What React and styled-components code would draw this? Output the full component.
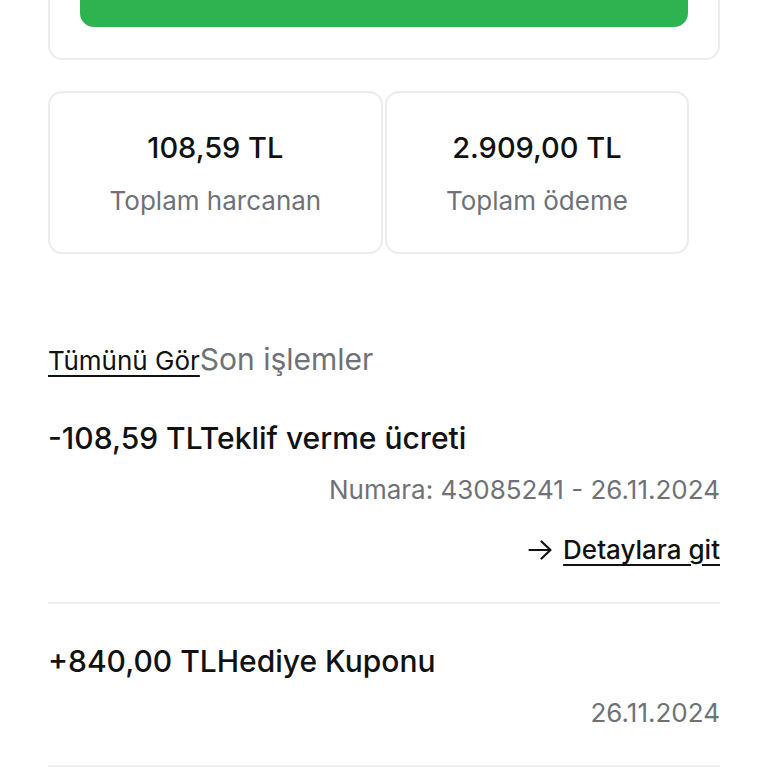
import React from 'react';
import styled, { createGlobalStyle } from 'styled-components';

const Global = createGlobalStyle`
  body {
    margin: 0;
    background: #ffffff;
    font-family: Inter, Roboto, "Liberation Sans", sans-serif;
    color: #111111;
  }
`;

const Page = styled.div`
  width: 768px;
  height: 768px;
  overflow: hidden;
  box-sizing: border-box;
  padding: 0 48px;
`;

const Scroll = styled.div`
  margin-top: -60px;
`;

const TopCard = styled.div`
  border: 2px solid #ececec;
  border-radius: 14px;
  padding: 30px 30px 31px;
`;

const GreenButton = styled.div`
  height: 55px;
  border-radius: 14px;
  background: #2db350;
`;

const Stats = styled.div`
  display: flex;
  gap: 2px;
  margin-top: 31px;
  padding-right: 31px;
`;

const StatCard = styled.div`
  flex: ${(p) => p.grow};
  height: 163px;
  box-sizing: border-box;
  padding-top: 4px;
  border: 2px solid #ececec;
  border-radius: 14px;
  display: flex;
  flex-direction: column;
  align-items: center;
  justify-content: center;
  gap: 17px;
`;

const StatValue = styled.div`
  font-size: 29px;
  font-weight: 500;
  color: #111;
  line-height: 36px;
`;

const StatLabel = styled.div`
  font-size: 26px;
  color: #6e7278;
  line-height: 36px;
`;

const Heading = styled.div`
  margin: 87px 0 2px;
  display: flex;
  align-items: baseline;
  line-height: 36px;
`;

const SeeAll = styled.a`
  font-size: 26px;
  color: #111;
  text-decoration: underline;
  text-underline-offset: 5px;
  text-decoration-thickness: 2px;
`;

const HeadingTitle = styled.span`
  font-size: 30px;
  color: #6e7278;
`;

const Row = styled.div`
  padding: 39px 0 34px;
  border-bottom: 2px solid #efefef;
  display: flex;
  flex-direction: column;
`;

const RowTitle = styled.div`
  font-size: 30px;
  font-weight: 500;
  line-height: 36px;
  color: #111;
`;

const RowMeta = styled.div`
  margin-top: 16px;
  align-self: flex-end;
  font-size: 26px;
  line-height: 36px;
  color: #6e7278;
`;

const DetailLink = styled.a`
  margin-top: 24px;
  align-self: flex-end;
  display: flex;
  align-items: center;
  gap: 11px;
  font-size: 26px;
  font-weight: 500;
  line-height: 36px;
  color: #111;
`;

const LinkText = styled.span`
  text-decoration: underline;
  text-underline-offset: 5px;
  text-decoration-thickness: 2px;
`;

const Arrow = () => (
  <svg width="24" height="22" viewBox="0 0 24 22" fill="none" stroke="#111" strokeWidth="2.2" strokeLinecap="round" strokeLinejoin="round">
    <path d="M1.5 11h21M13.5 2.5l9 8.5-9 8.5" />
  </svg>
);

export default function App() {
  return (
    <Page>
      <Global />
      <Scroll>
        <TopCard>
          <GreenButton />
        </TopCard>
        <Stats>
          <StatCard grow="335">
            <StatValue>108,59 TL</StatValue>
            <StatLabel>Toplam harcanan</StatLabel>
          </StatCard>
          <StatCard grow="304">
            <StatValue>2.909,00 TL</StatValue>
            <StatLabel>Toplam ödeme</StatLabel>
          </StatCard>
        </Stats>
        <Heading>
          <SeeAll>Tümünü Gör</SeeAll>
          <HeadingTitle>Son işlemler</HeadingTitle>
        </Heading>
        <Row>
          <RowTitle>-108,59 TLTeklif verme ücreti</RowTitle>
          <RowMeta>Numara: 43085241 - 26.11.2024</RowMeta>
          <DetailLink>
            <Arrow />
            <LinkText>Detaylara git</LinkText>
          </DetailLink>
        </Row>
        <Row>
          <RowTitle>+840,00 TLHediye Kuponu</RowTitle>
          <RowMeta>26.11.2024</RowMeta>
        </Row>
      </Scroll>
    </Page>
  );
}
